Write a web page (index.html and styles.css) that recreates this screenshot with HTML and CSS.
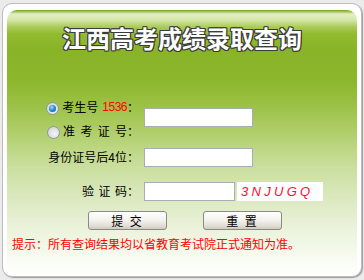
FILE: index.html
```html
<!DOCTYPE html>
<html lang="zh-CN">
<head>
<meta charset="utf-8">
<title>江西高考成绩录取查询</title>
<link rel="stylesheet" href="styles.css">
</head>
<body>
<div class="frame">
  <div class="panel">
    <h1 class="title">江西高考成绩录取查询</h1>
    <form class="form">
      <div class="lbl r1"><span class="radio on"></span>考生号<span class="red">1536</span>：</div>
      <div class="field r12"><input class="inp" type="text"></div>
      <div class="lbl r2"><span class="radio"></span><span class="sp">准考证</span>号：</div>
      <div class="lbl r3">身份证号后4位：</div>
      <div class="field r3"><input class="inp" type="text"></div>
      <div class="lbl r4"><span class="sp2">验证</span>码：</div>
      <div class="field r4"><input class="inp short" type="text"><span class="captcha">3NJUGQ</span></div>
    </form>
    <div class="btns">
      <button class="btn" type="button">提 交</button>
      <button class="btn" type="button">重 置</button>
    </div>
    <p class="note">提示：所有查询结果均以省教育考试院正式通知为准。</p>
  </div>
</div>
</body>
</html>
```

FILE: styles.css
```css
html, body {
  margin: 0;
  padding: 0;
}
body {
  background: #ebebeb;
  width: 364px;
  height: 280px;
  overflow: hidden;
  font-family: "Noto Sans CJK SC", "Liberation Sans", sans-serif;
  font-size: 12px;
  color: #000;
}
.frame {
  box-sizing: border-box;
  margin: 3px 2px 0;
  width: 360px;
  height: 274px;
  border: 1px solid #bcbcbc;
  border-radius: 10px;
  background: #fff;
  box-shadow: 1px 1px 1px #9d9d9d;
  padding: 6px 4px 0 4px;
}
.panel {
  height: 266px;
  border-radius: 10px 10px 8px 8px;
  background: linear-gradient(to bottom,
    #74a00f 0px, #8fb83a 1px, #e3eec8 4px, #d6e7a8 10px, #aacb58 17px,
    #92bb30 24px, #89b428 40px, #8cb72c 70px, #9bc145 95px,
    #b2d06e 125px, #c9de9c 155px, #dce9c1 190px, #ebf3dc 220px,
    #f8fbf1 248px, #ffffff 266px);
}
.title {
  margin: 0;
  padding-top: 14px;
  height: 28px;
  line-height: 28px;
  font-size: 24px;
  font-weight: 700;
  text-align: center;
  color: #fff;
  text-shadow:
    -1px -1px 0 #3c3c3c, 1px -1px 0 #3c3c3c,
    -1px 1px 0 #3c3c3c, 1px 1px 0 #3c3c3c,
    0 1px 0 #3c3c3c, 0 -1px 0 #3c3c3c,
    1px 0 0 #3c3c3c, -1px 0 0 #3c3c3c;
}
.form {
  margin: 43px 0 0;
  display: grid;
  grid-template-columns: 132px 1fr;
  grid-template-rows: 24px 24px 28px 40px;
  column-gap: 5px;
}
.lbl {
  grid-column: 1;
  display: flex;
  align-items: center;
  justify-content: flex-end;
  white-space: nowrap;
  line-height: 14px;
}
.r1 { grid-row: 1; }
.r2 { grid-row: 2; }
.r3 { grid-row: 3; }
.r4 { grid-row: 4; }
.field {
  grid-column: 2;
  display: flex;
  align-items: center;
}
.field.r12 {
  grid-row: 1 / 3;
  align-items: flex-start;
  padding-top: 13px;
}
.red {
  color: #ff0000;
  font-family: "Liberation Sans", sans-serif;
  letter-spacing: -0.5px;
  margin-left: 4px;
}
.sp { letter-spacing: 5.3px; }
.sp2 { letter-spacing: 4.5px; }
.radio {
  box-sizing: border-box;
  width: 13px;
  height: 13px;
  border-radius: 50%;
  border: 1px solid #8a98a6;
  background: radial-gradient(circle at 60% 60%, #f4f4f4 0, #dcdcdc 60%, #c4c4c4 100%);
  margin-right: 3px;
  margin-top: 3px;
  position: relative;
}
.radio.on::after {
  content: "";
  position: absolute;
  left: 2px;
  top: 2px;
  width: 7px;
  height: 7px;
  border-radius: 50%;
  background: radial-gradient(circle at 40% 35%, #9fe0ff 0, #2a8fd6 45%, #0a4a86 100%);
}
.inp {
  box-sizing: border-box;
  width: 109px;
  height: 19px;
  margin: 0;
  padding: 0 2px;
  border: 1px solid #a8adb2;
  background: #fff;
  font: 12px "Liberation Sans", sans-serif;
}
.inp.short { width: 91px; }
.captcha {
  box-sizing: border-box;
  margin-left: 2px;
  width: 86px;
  height: 19px;
  background: #fff;
  color: #ff0a3c;
  font: italic 13px/19px "Liberation Sans", sans-serif;
  letter-spacing: 3.3px;
  padding-left: 4px;
}
.btns {
  display: flex;
  gap: 36px;
  padding-left: 81px;
}
.btn {
  box-sizing: border-box;
  width: 79px;
  height: 19px;
  margin: 0;
  padding: 0;
  border: 1px solid #8a8a8a;
  border-radius: 3px;
  background: linear-gradient(to bottom, #ffffff 0, #f4f3ee 45%, #e2dfd5 80%, #cfcabd 100%);
  font: 12px/17px "Noto Sans CJK SC", sans-serif;
  color: #000;
  letter-spacing: 2px;
}
.note {
  margin: 6px 0 0;
  padding-left: 5px;
  line-height: 16px;
  color: #ff0000;
  white-space: nowrap;
}
```
